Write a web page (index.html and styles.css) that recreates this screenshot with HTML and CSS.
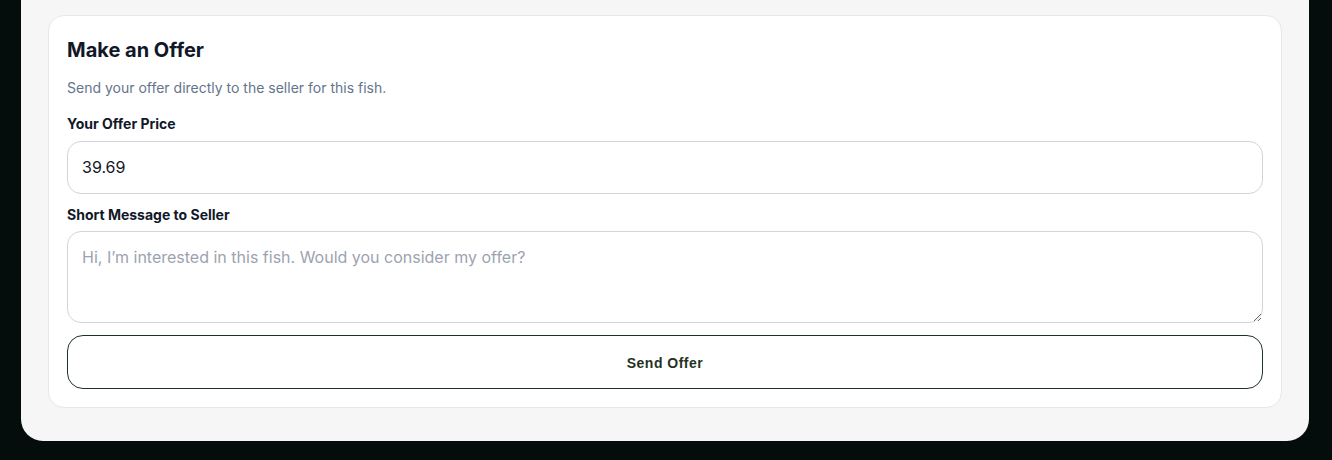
FILE: index.html
```html
<!DOCTYPE html>
<html lang="en">
<head>
<meta charset="utf-8">
<title>Make an Offer</title>
<link rel="stylesheet" href="styles.css">
</head>
<body>
<div class="page">
  <div class="panel">
    <form class="card">
      <h2 class="title">Make an Offer</h2>
      <p class="subtitle">Send your offer directly to the seller for this fish.</p>
      <label class="label" for="price">Your Offer Price</label>
      <input class="input" id="price" type="text" value="39.69">
      <label class="label" for="msg">Short Message to Seller</label>
      <textarea class="textarea" id="msg" placeholder="Hi, I’m interested in this fish. Would you consider my offer?"></textarea>
      <button class="button" type="button">Send Offer</button>
    </form>
  </div>
</div>
</body>
</html>
```

FILE: styles.css
```css
* { box-sizing: border-box; }
html, body { margin: 0; padding: 0; }
body {
  background: #040d0b;
  font-family: Inter, "Noto Sans", sans-serif;
  width: 1332px;
  height: 460px;
  overflow: hidden;
}
.page {
  padding: 0 23px 19px 21px;
}
.panel {
  background: #f6f6f6;
  border-radius: 0 0 22px 22px;
  padding: 15px 27px 33px 27px;
}
.card {
  background: #ffffff;
  border: 1px solid #e5e7eb;
  border-radius: 16px;
  padding: 21px 18px 18px 18px;
  display: flex;
  flex-direction: column;
}
.title {
  margin: 0;
  font-size: 20px;
  font-weight: 700;
  line-height: 26px;
  color: #111827;
}
.subtitle {
  margin: 16px 0 0 0;
  font-size: 14px;
  line-height: 18px;
  color: #64748b;
}
.label {
  margin-top: 19px;
  font-size: 14px;
  font-weight: 700;
  line-height: 16px;
  color: #111827;
}
.input {
  margin-top: 9px;
  height: 53px;
  border: 1px solid #d1d5db;
  border-radius: 14px;
  padding: 0 14px 1px 14px;
  font-family: Inter, "Noto Sans", sans-serif;
  font-size: 16px;
  color: #111827;
  background: #fff;
  outline: none;
}
.input + .label { margin-top: 13px; }
.textarea {
  margin-top: 8px;
  height: 92px;
  border: 1px solid #d1d5db;
  border-radius: 14px;
  padding: 13px 14px;
  font-family: Inter, "Noto Sans", sans-serif;
  font-size: 16px;
  line-height: 24px;
  color: #111827;
  background: #fff;
  resize: vertical;
  outline: none;
}
.textarea::placeholder { color: #9ca3af; }
.button {
  margin-top: 12px;
  height: 54px;
  padding-top: 2px;
  border: 1px solid #1f3324;
  border-radius: 16px;
  background: #fff;
  color: #1f3324;
  font-family: "Liberation Sans", Arial, sans-serif;
  font-size: 14px;
  font-weight: 700;
  letter-spacing: 0.5px;
  cursor: pointer;
}
```
